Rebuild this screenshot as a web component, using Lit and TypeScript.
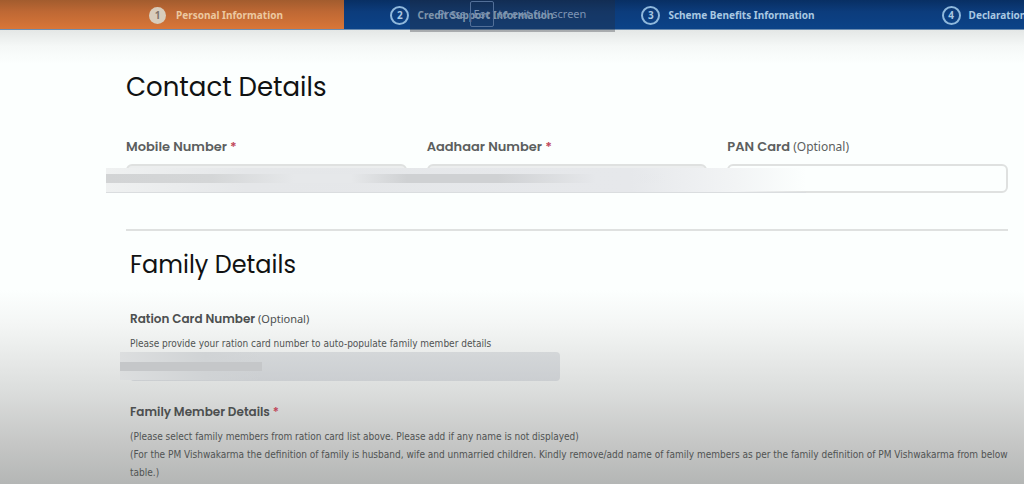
import { LitElement, html, css } from "lit";
import { customElement } from "lit/decorators.js";
import { classMap } from "lit/directives/class-map.js";

const STEPS = [
  "Personal Information",
  "Credit Support Information",
  "Scheme Benefits Information",
  "Declaration",
];

@customElement("step-bar")
export class StepBar extends LitElement {
  static styles = css`
    :host {
      display: block;
      overflow: hidden;
    }
    .steps {
      display: grid;
      grid-template-columns: calc(88px + 25vw) repeat(3, 25vw);
      height: 30px;
      box-sizing: border-box;
      border-bottom: 1px solid #6d8db0;
      background: linear-gradient(#082f63, #0c3c7c 40%, #0c4388);
    }
    .step {
      display: flex;
      align-items: center;
      justify-content: center;
      gap: 8px;
      padding-top: 1px;
      color: #a9c8e2;
      font: 700 10px/16px "Noto Sans", sans-serif;
      text-decoration: none;
      white-space: nowrap;
    }
    .active {
      padding-left: 88px;
      gap: 10px;
      color: #ecc8a0;
      background: linear-gradient(#a25c2e, #be6834 40%, #d97638);
    }
    .num {
      box-sizing: border-box;
      width: 19px;
      height: 19px;
      border: 2px solid #8fb8dc;
      border-radius: 50%;
      text-align: center;
      line-height: 15px;
    }
    .active .num {
      width: 17px;
      height: 17px;
      border: 0;
      line-height: 17px;
      background: #d8cdbc;
      color: #80746a;
    }
  `;

  render() {
    return html`<nav class="steps">
      ${STEPS.map(
        (name, i) => html`<a class=${classMap({ step: true, active: i === 0 })} href="#"
          ><span class="num">${i + 1}</span><span>${name}</span></a
        >`
      )}
    </nav>`;
  }
}

@customElement("app-root")
export class AppRoot extends LitElement {
  static styles = css`
    :host {
      display: block;
      position: relative;
      box-sizing: border-box;
      min-height: 100vh;
      overflow: hidden;
      color: #505353;
      font-family: "Noto Sans", sans-serif;
      background: linear-gradient(
        #e4e7e6 30px,
        #f5f8f7 46px,
        #fcfffe 64px,
        #fcfffe 290px,
        #f4f6f5 324px,
        #dbdddc 392px,
        #c6c7c6 442px,
        #b4b6b5 484px
      );
    }
    .toast {
      position: absolute;
      top: 0;
      left: 40%;
      display: flex;
      justify-content: center;
      align-items: center;
      gap: 4px;
      width: 205px;
      height: 32px;
      padding-bottom: 4px;
      box-sizing: border-box;
      background: rgba(40, 44, 52, 0.32);
      color: #7d94b4;
      font: 11px/16px "Noto Sans", sans-serif;
      white-space: nowrap;
    }
    .key {
      border: 1px solid #526f98;
      border-radius: 2px;
      padding: 4px 3px;
      font: inherit;
    }
    main {
      padding: 40px 16px 0 126px;
    }
    h2 {
      margin: 0;
      color: #101212;
      font: 400 26px/34px Poppins, Inter, sans-serif;
    }
    .fields {
      position: relative;
      display: grid;
      grid-template-columns: repeat(3, 1fr);
      gap: 20px;
      padding: 34px 0 36px;
      border-bottom: 2px solid #dfe1e0;
    }
    label,
    .label {
      display: block;
      margin: 0;
      font: 600 13px/18px Poppins, Inter, sans-serif;
      color: #5c5f5f;
    }
    .opt {
      font: 400 12px/18px "Noto Sans", sans-serif;
    }
    .req {
      color: #c04558;
    }
    input {
      display: block;
      box-sizing: border-box;
      width: 100%;
      height: 29px;
      margin: 8px 0 0;
      padding: 0 8px;
      border: 2px solid #dfe1e0;
      border-radius: 6px;
      background: transparent;
      font: 12px/18px "Noto Sans", sans-serif;
    }
    input.locked {
      background: #eceeee;
    }
    .smear {
      position: absolute;
      left: -20px;
      bottom: 36px;
      width: 700px;
      height: 25px;
      box-sizing: border-box;
      padding-top: 6px;
      border-bottom: 1px solid #dadddf;
      background: linear-gradient(
          90deg,
          #eff1f1,
          #e5e7e9 20%,
          #e6e8eb 75%,
          #f2f4f5 90%,
          rgba(252, 255, 254, 0)
        )
        padding-box;
    }
    .streak {
      height: 9px;
      background: linear-gradient(
        90deg,
        #d2d4d5,
        #d4d6d7 15%,
        #e6e8ea 27%,
        #e6e8ea 35%,
        #cfd1d3 43%,
        #cfd1d3 56%,
        #e6e8eb 70%,
        transparent 80%
      );
    }
    .family {
      padding: 17px 0 0 4px;
    }
    .family h2 {
      font-size: 24px;
      line-height: 34px;
    }
    .family label,
    .family .label {
      margin-top: 28px;
      font-size: 12px;
      color: #4c4f4f;
    }
    .family .label {
      margin-top: 22px;
    }
    .family .opt {
      font-size: 11px;
    }
    p {
      margin: 0;
      font: 10px/18px "DejaVu Sans Condensed", Lato, sans-serif;
    }
    .hint {
      margin-top: 7px;
    }
    .ration {
      position: relative;
      width: 49%;
    }
    .ration input {
      margin-top: -1px;
      border: 0;
      border-radius: 4px;
      background: linear-gradient(#d4d7d9, #cbced1);
    }
    .blot {
      position: absolute;
      left: -10px;
      top: 0;
      width: 142px;
      height: 28px;
      box-sizing: border-box;
      padding-top: 10px;
      background: linear-gradient(90deg, #dcdedf, #d0d3d5 60%, rgba(208, 211, 213, 0));
    }
    .blot .streak {
      background: #c5c7c9;
    }
    .notes {
      margin-top: 7px;
    }
  `;

  render() {
    return html`
      <step-bar></step-bar>
      <div class="toast">
        <span>Press</span><kbd class="key">Esc</kbd><span>to exit full screen</span>
      </div>
      <main>
        <h2>Contact Details</h2>
        <div class="fields">
          <div>
            <label for="mobile">Mobile Number <span class="req">*</span></label>
            <input id="mobile" class="locked" type="tel" />
          </div>
          <div>
            <label for="aadhaar">Aadhaar Number <span class="req">*</span></label>
            <input id="aadhaar" class="locked" type="text" />
          </div>
          <div>
            <label for="pan">PAN Card <span class="opt">(Optional)</span></label>
            <input id="pan" type="text" />
          </div>
          <div class="smear"><div class="streak"></div></div>
        </div>
        <section class="family">
          <h2>Family Details</h2>
          <label for="ration">Ration Card Number <span class="opt">(Optional)</span></label>
          <p class="hint">Please provide your ration card number to auto-populate family member details</p>
          <div class="ration">
            <input id="ration" type="text" />
            <div class="blot"><div class="streak"></div></div>
          </div>
          <h3 class="label">Family Member Details <span class="req">*</span></h3>
          <div class="notes">
            <p>(Please select family members from ration card list above. Please add if any name is not displayed)</p>
            <p>
              (For the PM Vishwakarma the definition of family is husband, wife and unmarried children. Kindly
              remove/add name of family members as per the family definition of PM Vishwakarma from below table.)
            </p>
          </div>
        </section>
      </main>
    `;
  }
}
